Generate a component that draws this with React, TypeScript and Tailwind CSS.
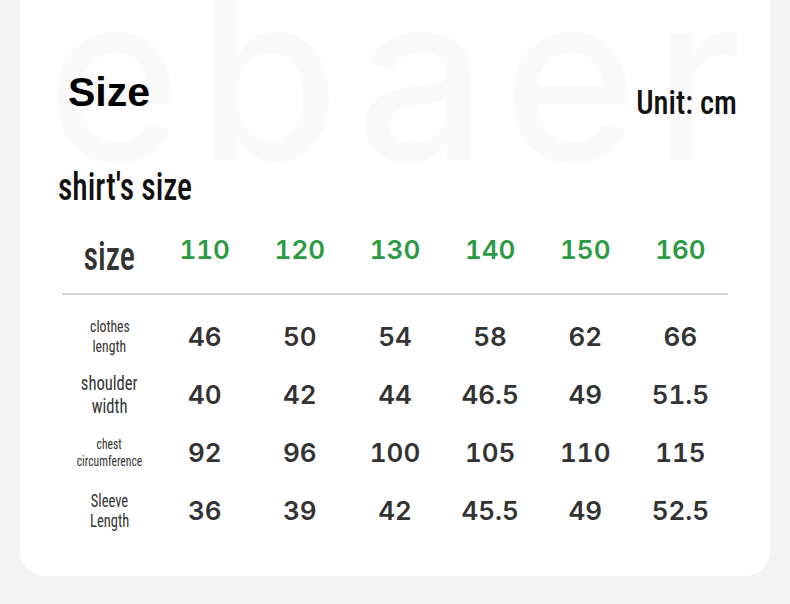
const COND = "'Roboto Condensed', 'DejaVu Sans Condensed', 'Liberation Sans Narrow', sans-serif";
const NUM = "Inter, Roboto, sans-serif";

const sizes = ['110', '120', '130', '140', '150', '160'];
const rows = [
  { label: ['clothes', 'length'], cls: 'text-[16.5px] leading-[20px]', vals: ['46', '50', '54', '58', '62', '66'] },
  { label: ['shoulder', 'width'], cls: 'text-[20px] leading-[23px]', vals: ['40', '42', '44', '46.5', '49', '51.5'] },
  { label: ['chest', 'circumference'], cls: 'text-[14px] leading-[17px]', vals: ['92', '96', '100', '105', '110', '115'] },
  { label: ['Sleeve', 'Length'], cls: 'text-[17.5px] leading-[20px]', vals: ['36', '39', '42', '45.5', '49', '52.5'] },
];

export default function App() {
  return (
    <div className="w-[790px] h-[604px] bg-[#f4f4f4] px-[20px]">
      <div className="relative h-[576px] bg-white rounded-b-[26px] overflow-hidden">
        <div
          aria-hidden
          className="absolute left-[26px] top-[-40px] text-[232px] leading-none font-medium tracking-[14px] text-[#fafafa] select-none whitespace-nowrap"
          style={{ fontFamily: "Inter, sans-serif" }}
        >
          ebaer
        </div>
        <div className="relative">
          <div className="flex items-start justify-between pl-[48px] pr-[33px] pt-[69px]">
            <div className="text-[41px] leading-[46px] font-bold text-black" style={{ fontFamily: "'Liberation Sans', Arial, sans-serif" }}>
              Size
            </div>
            <div className="mt-[16px] text-[34px] leading-none font-medium text-[#111]" style={{ fontFamily: COND }}>
              <span className="inline-block scale-x-[0.9] origin-right">Unit: cm</span>
            </div>
          </div>
          <div className="pl-[38px] mt-[49px] text-[38px] leading-none font-medium text-[#111]" style={{ fontFamily: COND }}>
            <span className="inline-block scale-x-[0.83] origin-left">shirt's size</span>
          </div>
          <div className="mx-[42px] mt-[4px]">
            <div className="grid grid-cols-7 h-[83px] items-center">
              <div className="text-center text-[40px] leading-none font-medium text-[#333] pt-[11px]" style={{ fontFamily: COND }}>
                <span className="inline-block scale-x-[0.8] origin-center">size</span>
              </div>
              {sizes.map((s) => (
                <div key={s} className="text-center text-[26px] leading-none font-semibold tabular-nums text-[#2c9a44] pb-[4px]" style={{ fontFamily: NUM }}>
                  {s}
                </div>
              ))}
            </div>
            <div className="h-[2px] bg-[#d4d4d4]" />
            <div className="pt-[13px]">
              {rows.map((r) => (
                <div key={r.label[0]} className="grid grid-cols-7 h-[58px] items-center">
                  <div className={`text-center text-[#333] ${r.cls}`} style={{ fontFamily: COND }}>
                    <div><span className="inline-block scale-x-[0.83] origin-center">{r.label[0]}</span></div>
                    <div><span className="inline-block scale-x-[0.83] origin-center">{r.label[1]}</span></div>
                  </div>
                  {r.vals.map((v, i) => (
                    <div key={i} className="text-center text-[26px] leading-none font-semibold tabular-nums text-[#333]" style={{ fontFamily: NUM }}>
                      {v}
                    </div>
                  ))}
                </div>
              ))}
            </div>
          </div>
        </div>
      </div>
    </div>
  );
}
